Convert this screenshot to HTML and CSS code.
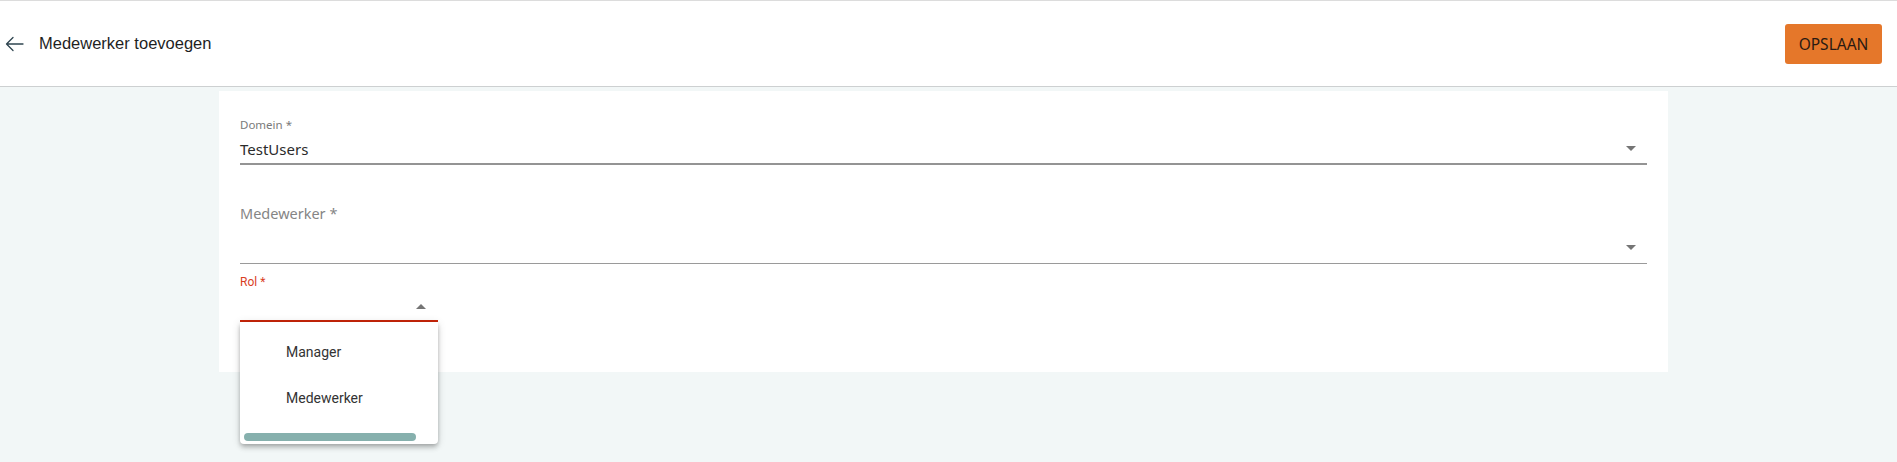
FILE: index.html
```html
<!DOCTYPE html>
<html lang="nl">
<head>
<meta charset="utf-8">
<title>Medewerker toevoegen</title>
<link rel="stylesheet" href="styles.css">
</head>
<body>
<header class="topbar">
  <div class="title-wrap">
    <svg class="back" width="19" height="16" viewBox="0 0 19 16" aria-hidden="true">
      <path d="M18 8H1.5M8 1.5L1.5 8L8 14.5" fill="none" stroke="#2f4550" stroke-width="1.3" stroke-linecap="round" stroke-linejoin="round"/>
    </svg>
    <span class="title">Medewerker toevoegen</span>
  </div>
  <button class="save">OPSLAAN</button>
</header>
<main class="card">
  <div class="field f-domein">
    <div class="small-label">Domein *</div>
    <div class="row">
      <span class="value">TestUsers</span>
      <span class="caret down"></span>
    </div>
  </div>
  <div class="field f-mw">
    <div class="big-label">Medewerker *</div>
    <div class="row">
      <span class="value"></span>
      <span class="caret down"></span>
    </div>
  </div>
  <div class="field f-rol">
    <div class="rol-label">Rol *</div>
    <div class="row">
      <span class="value"></span>
      <span class="caret up"></span>
    </div>
    <div class="panel">
      <div class="option">Manager</div>
      <div class="option">Medewerker</div>
      <div class="hscroll"></div>
    </div>
  </div>
</main>
</body>
</html>
```
FILE: styles.css
```css
html, body {
  margin: 0;
  padding: 0;
}
body {
  background: #f2f7f7;
  width: 1897px;
  height: 462px;
  overflow: hidden;
}
.topbar {
  box-sizing: border-box;
  height: 87px;
  background: #fff;
  border-top: 1px solid #dcdcdc;
  border-bottom: 1px solid #cdd0d1;
  display: flex;
  align-items: center;
  justify-content: space-between;
  padding: 0 15px 0 5px;
}
.title-wrap {
  display: flex;
  align-items: center;
  gap: 15px;
}
.back {
  display: block;
}
.title {
  font-family: "Liberation Sans", Arial, sans-serif;
  font-size: 16.5px;
  color: #1f1f1f;
}
.save {
  width: 97px;
  height: 40px;
  border: none;
  border-radius: 3px;
  background: #e5772a;
  color: #2a1a12;
  font-family: "Noto Sans", sans-serif;
  font-size: 15.5px;
  padding: 0;
  margin-top: 1px;
}
.card {
  box-sizing: border-box;
  margin: 4px 0 0 219px;
  width: 1449px;
  height: 281px;
  background: #fff;
  padding: 25px 21px 0 21px;
}
.field {
  position: relative;
}
.row {
  display: flex;
  align-items: center;
  justify-content: space-between;
  box-sizing: border-box;
}
.caret {
  width: 0;
  height: 0;
  border-left: 5px solid transparent;
  border-right: 5px solid transparent;
  margin-right: 11px;
}
.caret.down {
  border-top: 5px solid #757575;
}
.caret.up {
  border-bottom: 5px solid #757575;
  margin-right: 12px;
}
.small-label {
  font-family: "Noto Sans", sans-serif;
  font-size: 11.5px;
  line-height: 18px;
  color: #7a7a7a;
}
.value {
  font-family: "Noto Sans", sans-serif;
  font-size: 15px;
  color: #2b2b2b;
}
.f-domein .row {
  height: 31px;
  border-bottom: 2px solid #949494;
}
.f-mw {
  padding-top: 37px;
}
.big-label {
  font-family: "Noto Sans", sans-serif;
  font-size: 14.5px;
  line-height: 22px;
  color: #858585;
}
.f-mw .row {
  height: 40px;
  padding-top: 7px;
  border-bottom: 1px solid #9a9a9a;
}
.f-rol {
  width: 198px;
}
.rol-label {
  font-family: Roboto, sans-serif;
  font-size: 12px;
  line-height: 14px;
  margin-top: 11px;
  color: #d9401f;
}
.f-rol .row {
  height: 33px;
  padding-top: 3px;
  border-bottom: 2px solid #c8260a;
}
.panel {
  position: absolute;
  top: 100%;
  left: 0;
  width: 198px;
  height: 122px;
  background: #fff;
  border-radius: 0 0 4px 4px;
  box-shadow: 0 2px 4px -1px rgba(0,0,0,.2), 0 4px 5px 0 rgba(0,0,0,.14), 0 1px 10px 0 rgba(0,0,0,.12);
  padding-top: 7px;
  box-sizing: border-box;
}
.option {
  height: 46px;
  line-height: 46px;
  padding-left: 46px;
  font-family: Roboto, sans-serif;
  font-size: 14px;
  color: #333;
}
.hscroll {
  margin: 12px 0 0 4px;
  width: 172px;
  height: 8px;
  border-radius: 4px;
  background: #86b0ad;
}
```
